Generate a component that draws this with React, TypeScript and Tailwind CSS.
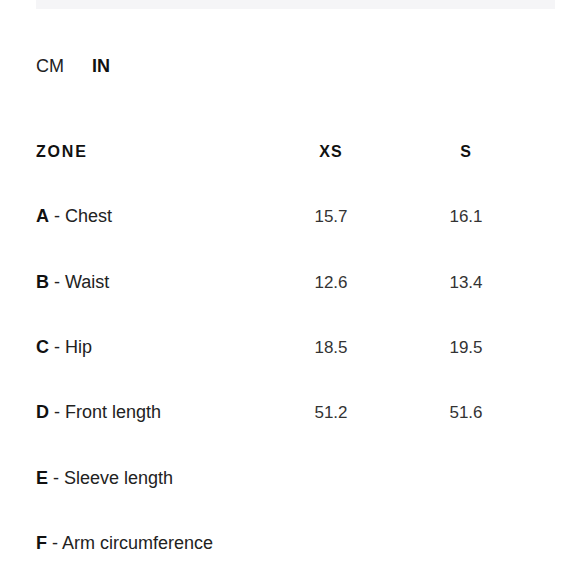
import React from "react";

const rows = [
  { k: "A", label: "Chest", xs: "15.7", s: "16.1" },
  { k: "B", label: "Waist", xs: "12.6", s: "13.4" },
  { k: "C", label: "Hip", xs: "18.5", s: "19.5" },
  { k: "D", label: "Front length", xs: "51.2", s: "51.6" },
  { k: "E", label: "Sleeve length", xs: "", s: "" },
  { k: "F", label: "Arm circumference", xs: "", s: "" },
];

export default function App() {
  return (
    <div
      className="w-[580px] h-[580px] overflow-hidden bg-white pl-[36px] pr-[25px]"
      style={{ fontFamily: '"Liberation Sans", Arial, sans-serif' }}
    >
      <div className="h-[9px] bg-[#f5f5f7]" />
      <div className="mt-[24px] h-[66px] flex items-center gap-[28px] text-[18px] text-[#222]">
        <span className="font-normal">CM</span>
        <span className="font-bold text-[#111]">IN</span>
      </div>
      <div className="mt-[20px] grid grid-cols-[228px_134px_136px]">
        <div className="h-[65.33px] flex items-center text-[16px] font-bold tracking-[1.8px] text-[#111]">ZONE</div>
        <div className="h-[65.33px] flex items-center justify-center text-[16px] font-bold tracking-[1px] text-[#111]">XS</div>
        <div className="h-[65.33px] flex items-center justify-center text-[16px] font-bold tracking-[1px] text-[#111]">S</div>
        {rows.map((r) => (
          <React.Fragment key={r.k}>
            <div className="h-[65.33px] flex items-center text-[18px] text-[#222] whitespace-nowrap">
              <span className="font-bold text-[#111]">{r.k}</span>
              <span>&nbsp;- {r.label}</span>
            </div>
            <div className="h-[65.33px] flex items-center justify-center text-[17px] text-[#333]">{r.xs}</div>
            <div className="h-[65.33px] flex items-center justify-center text-[17px] text-[#333]">{r.s}</div>
          </React.Fragment>
        ))}
      </div>
    </div>
  );
}
